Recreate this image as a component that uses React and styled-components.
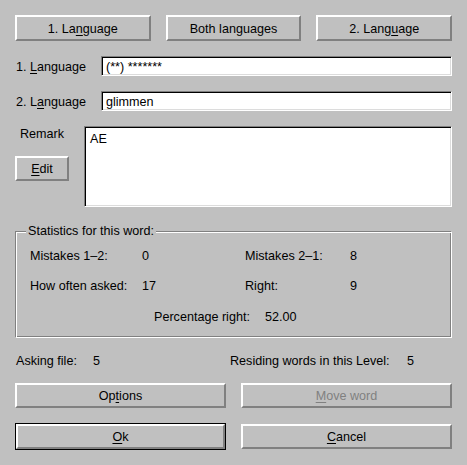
import React from 'react';
import styled, { createGlobalStyle } from 'styled-components';

const Global = createGlobalStyle`
  html, body { margin: 0; padding: 0; background: #c0c0c0; }
  body {
    font-family: "Liberation Sans", Arial, Helvetica, sans-serif;
    font-size: 12.6px;
    color: #000;
  }
`;

const Dialog = styled.div`
  width: 467px;
  height: 465px;
  box-sizing: border-box;
  padding: 15px 15px 0 15px;
  display: flex;
  flex-direction: column;
  background: #c0c0c0;
`;

const U = styled.span`
  text-decoration: underline;
  text-underline-offset: 2px;
`;

const Button = styled.button`
  box-sizing: border-box;
  height: ${p => p.$h || 25}px;
  width: ${p => (p.$w ? `${p.$w}px` : '100%')};
  margin: 0;
  padding: 2px 0 0 0;
  background: #c0c0c0;
  border: 2px solid;
  border-color: #ffffff #808080 #808080 #ffffff;
  font: inherit;
  color: ${p => (p.disabled ? '#808080' : '#000')};
  line-height: 1;
  display: flex;
  align-items: center;
  justify-content: center;
`;

const DefaultFrame = styled.div`
  border: 1px solid #000;
  height: 27px;
  box-sizing: border-box;
`;

const TopRow = styled.div`
  display: grid;
  grid-template-columns: 1fr 1fr 1fr;
  column-gap: 15px;
  height: 26px;
`;

const FieldRow = styled.div`
  display: grid;
  grid-template-columns: 86px 1fr;
  align-items: center;
  height: 20px;
  margin-top: 15px;
`;

const Label = styled.span`
  padding-left: 1px;
  padding-top: 1px;
  white-space: nowrap;
`;

const Sunken = styled.div`
  box-sizing: border-box;
  background: #fff;
  border: 1px solid;
  border-color: #808080 #ffffff #ffffff #808080;
  box-shadow: inset 1px 1px 0 #000, inset -1px -1px 0 #dcdcdc;
  white-space: pre;
`;

const LineEdit = styled(Sunken)`
  height: 20px;
  padding: 1px 4px 0 4px;
  display: flex;
  align-items: center;
`;

const RemarkBlock = styled.div`
  display: grid;
  grid-template-columns: 69px 1fr;
  height: 81px;
  margin-top: 15px;
`;

const RemarkSide = styled.div`
  display: flex;
  flex-direction: column;
  align-items: flex-start;
`;

const RemarkLabel = styled.span`
  width: 54px;
  text-align: center;
  line-height: 16px;
  margin-bottom: 14px;
`;

const TextArea = styled(Sunken)`
  height: 81px;
  padding: 5px 5px;
  line-height: 15px;
`;

const Group = styled.div`
  position: relative;
  margin-top: 24px;
  height: 107px;
  box-sizing: border-box;
  border: 1px solid;
  border-color: #808080 #ffffff #ffffff #808080;
  box-shadow: inset 1px 1px 0 #ffffff, inset -1px -1px 0 #808080;
`;

const GroupTitle = styled.span`
  position: absolute;
  top: -8px;
  left: 10px;
  padding: 0 2px;
  line-height: 15px;
  background: #c0c0c0;
`;

const StatsGrid = styled.div`
  display: grid;
  grid-template-columns: 112px 103px 105px 1fr;
  grid-auto-rows: 30px;
  align-items: center;
  padding: 9px 0 0 14px;
  white-space: nowrap;
`;

const PercentRow = styled.div`
  grid-column: 1 / -1;
  display: grid;
  grid-template-columns: 111px auto;
  padding-left: 124px;
  position: relative;
  top: 1px;
`;

const InfoRow = styled.div`
  display: grid;
  grid-template-columns: 214px 1fr;
  height: 14px;
  margin-top: 16px;
  padding-left: 1px;
  align-items: center;
  white-space: nowrap;
`;

const InfoItem = styled.div`
  display: grid;
  grid-template-columns: ${p => p.$w}px auto;
`;

const ActionRow = styled.div`
  display: grid;
  grid-template-columns: 1fr 1fr;
  column-gap: 15px;
  height: ${p => p.$h || 25}px;
  margin-top: 15px;
  align-items: center;
`;

export default function App() {
  return (
    <>
      <Global />
      <Dialog>
        <TopRow>
          <Button $h={26}>1. La<U>n</U>guage</Button>
          <Button $h={26}>Both languages</Button>
          <Button $h={26}>2. Lang<U>u</U>age</Button>
        </TopRow>

        <FieldRow>
          <Label>1. <U>L</U>anguage</Label>
          <LineEdit>(**) *******</LineEdit>
        </FieldRow>
        <FieldRow>
          <Label>2. L<U>a</U>nguage</Label>
          <LineEdit>glimmen</LineEdit>
        </FieldRow>

        <RemarkBlock>
          <RemarkSide>
            <RemarkLabel>Remark</RemarkLabel>
            <Button $w={54}><U>E</U>dit</Button>
          </RemarkSide>
          <TextArea>AE</TextArea>
        </RemarkBlock>

        <Group>
          <GroupTitle>Statistics for this word:</GroupTitle>
          <StatsGrid>
            <span>Mistakes 1–2:</span>
            <span>0</span>
            <span>Mistakes 2–1:</span>
            <span>8</span>
            <span>How often asked:</span>
            <span>17</span>
            <span>Right:</span>
            <span>9</span>
            <PercentRow>
              <span>Percentage right:</span>
              <span>52.00</span>
            </PercentRow>
          </StatsGrid>
        </Group>

        <InfoRow>
          <InfoItem $w={77}>
            <span>Asking file:</span>
            <span>5</span>
          </InfoItem>
          <InfoItem $w={177}>
            <span>Residing words in this Level:</span>
            <span>5</span>
          </InfoItem>
        </InfoRow>

        <ActionRow>
          <Button>Op<U>t</U>ions</Button>
          <Button disabled><U>M</U>ove word</Button>
        </ActionRow>

        <ActionRow $h={27}>
          <DefaultFrame>
            <Button><U>O</U>k</Button>
          </DefaultFrame>
          <Button><U>C</U>ancel</Button>
        </ActionRow>
      </Dialog>
    </>
  );
}
